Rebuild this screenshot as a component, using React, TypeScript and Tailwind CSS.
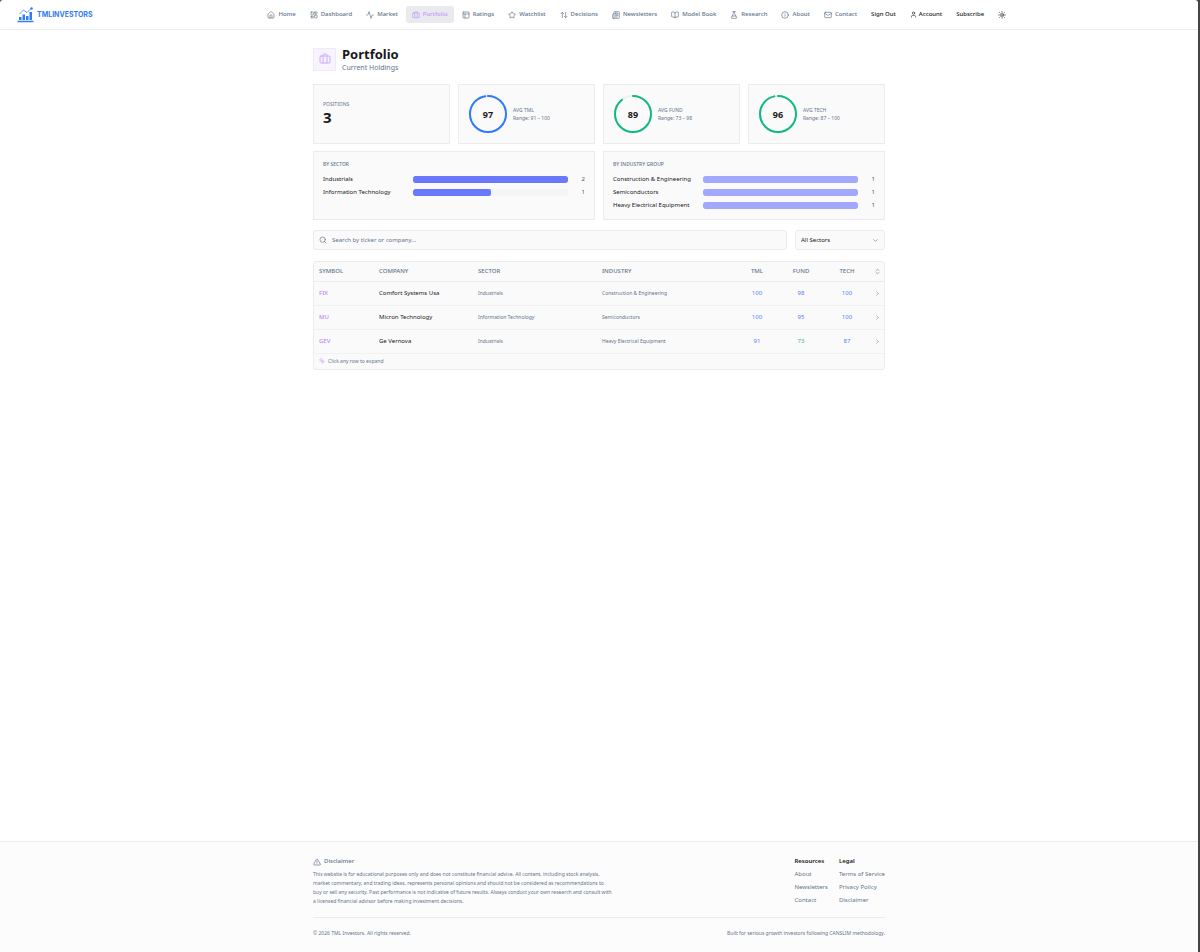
import React, { useState } from "react";
import {
  Activity,
  ArrowUpDown,
  BookOpen,
  Briefcase,
  ChevronDown,
  ChevronRight,
  ChevronsUpDown,
  FlaskConical,
  House,
  Info,
  LayoutDashboard,
  Mail,
  MousePointerClick,
  Newspaper,
  PanelsTopLeft,
  Search,
  Star,
  Sun,
  TriangleAlert,
  User
} from "lucide-react";

const navLinks = [
  { label: "Home", icon: House },
  { label: "Dashboard", icon: LayoutDashboard },
  { label: "Market", icon: Activity },
  { label: "Portfolio", icon: Briefcase, active: true },
  { label: "Ratings", icon: PanelsTopLeft },
  { label: "Watchlist", icon: Star },
  { label: "Decisions", icon: ArrowUpDown },
  { label: "Newsletters", icon: Newspaper },
  { label: "Model Book", icon: BookOpen },
  { label: "Research", icon: FlaskConical },
  { label: "About", icon: Info },
  { label: "Contact", icon: Mail }
];

const scores = [
  { label: "Avg TML", value: 97, range: "91 – 100", color: "text-[#2f7bf6]" },
  { label: "Avg Fund", value: 89, range: "73 – 98", color: "text-[#10b981]" },
  { label: "Avg Tech", value: 96, range: "87 – 100", color: "text-[#10b981]" }
];

const sectors = [
  { name: "Industrials", count: 2 },
  { name: "Information Technology", count: 1 }
];

const industries = [
  { name: "Construction & Engineering", count: 1 },
  { name: "Semiconductors", count: 1 },
  { name: "Heavy Electrical Equipment", count: 1 }
];

const holdings = [
  {
    symbol: "FIX",
    company: "Comfort Systems Usa",
    sector: "Industrials",
    industry: "Construction & Engineering",
    scores: [100, 98, 100]
  },
  {
    symbol: "MU",
    company: "Micron Technology",
    sector: "Information Technology",
    industry: "Semiconductors",
    scores: [100, 95, 100]
  },
  {
    symbol: "GEV",
    company: "Ge Vernova",
    sector: "Industrials",
    industry: "Heavy Electrical Equipment",
    scores: [91, 73, 87]
  }
];

const Logo = () => (
  <svg width="17" height="16" viewBox="0 0 34 32" fill="none" stroke="#2f7bf6">
    <path d="M1 29h32" strokeWidth="3" />
    <path d="M6.500 26v-6M13.500 26V15M20.500 26V18M27.500 26V10" strokeWidth="5" />
    <path d="M5 14l8-8 7 5 8-8" strokeWidth="1.500" />
    <circle cx="29" cy="3" r="2.500" fill="#2f7bf6" stroke="none" />
  </svg>
);

const Header = () => (
  <header className="flex h-[30px] items-center border-b border-[#ececee] px-[17px]">
    <a href="#" className="flex items-center gap-[3px]">
      <Logo />
      <span className="font-['Inter',sans-serif] text-[7px] font-bold text-[#2f7bf6]">
        TMLINVESTORS
      </span>
    </a>
    <nav className="flex flex-1 items-center justify-center gap-[2px] whitespace-nowrap font-medium">
      {navLinks.map(({ label, icon: Icon, active }) => (
        <a
          key={label}
          href="#"
          className={
            active
              ? "flex h-[17px] items-center gap-[3px] rounded-[3px] bg-[#e9e9ee] px-[6px] text-[#c49bfb]"
              : "flex h-[17px] items-center gap-[3px] px-[6px] text-[#64748b]"
          }
        >
          <Icon size={8} />
          {label}
        </a>
      ))}
      <button type="button" className="px-[6px] text-[#18181b]">
        Sign Out
      </button>
      <a href="#" className="flex items-center gap-[2px] px-[6px] text-[#18181b]">
        <User size={7} />
        Account
      </a>
      <a href="#" className="px-[6px] text-[#18181b]">
        Subscribe
      </a>
      <button type="button" aria-label="Toggle theme" className="px-[6px]">
        <Sun size={8} />
      </button>
    </nav>
  </header>
);

const Ring = ({ value, color }) => {
  const length = 2 * Math.PI * 18;
  return (
    <div className={`grid size-[38px] place-items-center ${color}`}>
      <svg
        className="col-start-1 row-start-1 -rotate-90"
        width="38"
        height="38"
        fill="none"
        strokeWidth="2"
      >
        <circle cx="19" cy="19" r="18" stroke="#eeeff1" />
        <circle
          cx="19"
          cy="19"
          r="18"
          stroke="currentColor"
          strokeLinecap="round"
          strokeDasharray={length}
          strokeDashoffset={length * (1 - value / 100)}
        />
      </svg>
      <span className="col-start-1 row-start-1 text-[9px] font-bold text-[#18181b]">
        {value}
      </span>
    </div>
  );
};

const Breakdown = ({ title, rows, barColor }) => {
  const max = Math.max(...rows.map(row => row.count));
  return (
    <section className="border border-[#ececee] bg-[#fafafa] px-[9px] pt-[9px] pb-[7px]">
      <h2 className="text-[5px] leading-[7px] font-medium text-[#64748b] uppercase">
        {title}
      </h2>
      <ul className="mt-[5px]">
        {rows.map(row => (
          <li key={row.name} className="flex h-[13px] items-center gap-[5px]">
            <span className="w-[85px] whitespace-nowrap">{row.name}</span>
            <div className="h-[7px] flex-1 overflow-hidden rounded-[2px] bg-[#f4f5f6]">
              <div
                className={`h-full rounded-[2px] ${barColor}`}
                style={{ width: `${(row.count / max) * 100}%` }}
              />
            </div>
            <span className="w-[12px] text-right text-[#475569]">
              {row.count}
            </span>
          </li>
        ))}
      </ul>
    </section>
  );
};

const HoldingsTable = ({ rows }) => (
  <div className="mt-[11px] overflow-hidden rounded-[3px] border border-[#ececee] bg-[#fafafa]">
    <table className="w-full table-fixed text-left">
      <thead className="text-[#64748b]">
        <tr className="h-[19px] border-b border-[#ececee] uppercase *:font-medium">
          <th className="w-[60px] pl-[5px]">Symbol</th>
          <th className="w-[99px] pl-[5px]">Company</th>
          <th className="w-[124px] pl-[5px]">Sector</th>
          <th className="pl-[5px]">Industry</th>
          <th className="w-[46px] text-center">TML</th>
          <th className="w-[42px] text-center">Fund</th>
          <th className="w-[50px] text-center">Tech</th>
          <th className="w-[12px] pl-[2px]">
            <button type="button" aria-label="Sort" className="block">
              <ChevronsUpDown size={7} />
            </button>
          </th>
        </tr>
      </thead>
      <tbody>
        {rows.map(row => (
          <tr key={row.symbol} className="h-[24px] border-b border-[#f1f1f2]">
            <td className="pl-[5px] font-medium text-[#c084fc]">{row.symbol}</td>
            <td className="pl-[5px]">{row.company}</td>
            <td className="pl-[5px] text-[5px] text-[#64748b]">{row.sector}</td>
            <td className="pl-[5px] text-[5px] text-[#64748b]">{row.industry}</td>
            {row.scores.map((score, i) => (
              <td
                key={i}
                className={
                  score >= 80
                    ? "text-center text-[#4f86f7]"
                    : "text-center text-[#2dbd90]"
                }
              >
                {score}
              </td>
            ))}
            <td className="pl-[2px] text-[#64748b]">
              <ChevronRight size={7} />
            </td>
          </tr>
        ))}
      </tbody>
    </table>
    <p className="flex h-[15px] items-center gap-[3px] px-[5px] text-[5px] text-[#64748b]">
      <MousePointerClick size={6} className="text-[#c084fc]" />
      Click any row to expand
    </p>
  </div>
);

const FooterLinks = ({ title, links }) => (
  <div>
    <h3 className="font-semibold text-[#18181b]">{title}</h3>
    <ul>
      {links.map(link => (
        <li key={link}>
          <a href="#">{link}</a>
        </li>
      ))}
    </ul>
  </div>
);

const Footer = () => (
  <footer className="mt-auto border-t border-[#ececee] bg-[#fcfcfc] text-[#64748b]">
    <div className="mx-auto max-w-[572px] pt-[13px] pb-[14px]">
      <div className="flex justify-between leading-[13px]">
        <div>
          <h3 className="flex items-center gap-[3px] font-medium">
            <TriangleAlert size={8} />
            Disclaimer
          </h3>
          <p className="mt-[2px] max-w-[299px] text-[5px] leading-[9px]">
            This website is for educational purposes only and does not constitute
            financial advice. All content, including stock analysis, market
            commentary, and trading ideas, represents personal opinions and should
            not be considered as recommendations to buy or sell any security. Past
            performance is not indicative of future results. Always conduct your
            own research and consult with a licensed financial advisor before
            making investment decisions.
          </p>
        </div>
        <div className="flex gap-[11px]">
          <FooterLinks
            title="Resources"
            links={["About", "Newsletters", "Contact"]}
          />
          <FooterLinks
            title="Legal"
            links={["Terms of Service", "Privacy Policy", "Disclaimer"]}
          />
        </div>
      </div>
      <div className="mt-[10px] flex justify-between border-t border-[#ececee] pt-[11px] text-[5px] leading-[9px]">
        <p>© 2026 TML Investors. All rights reserved.</p>
        <p>Built for serious growth investors following CANSLIM methodology.</p>
      </div>
    </div>
  </footer>
);

const App = () => {
  const [query, setQuery] = useState("");
  const [sector, setSector] = useState("All Sectors");

  const visible = holdings.filter(
    row =>
      (row.symbol + " " + row.company)
        .toLowerCase()
        .includes(query.toLowerCase()) &&
      (sector === "All Sectors" || row.sector === sector)
  );

  return (
    <div className="bg-[#444] pr-[2px] font-['Noto_Sans',sans-serif] text-[6px] leading-[9px] text-[#18181b]">
      <div className="flex min-h-screen flex-col rounded-[3px] bg-white">
        <Header />
        <main className="mx-auto w-full max-w-[572px] pt-[16px] pb-[30px]">
          <div className="flex items-center gap-[6px]">
            <div className="grid size-[23px] place-items-center border border-[#f0e9fd] bg-[#f8f4ff] text-[#cdaafb]">
              <Briefcase size={12} />
            </div>
            <div>
              <h1 className="text-[13px] leading-[17px] font-bold">Portfolio</h1>
              <p className="text-[7px] leading-[9px] text-[#64748b]">
                Current Holdings
              </p>
            </div>
          </div>

          <div className="mt-[12px] grid grid-cols-4 gap-[8px]">
            <section className="flex h-[60px] flex-col justify-center border border-[#ececee] bg-[#fafafa] px-[9px]">
              <h2 className="text-[5px] leading-[7px] text-[#64748b] uppercase">
                Positions
              </h2>
              <p className="text-[15px] leading-[19px] font-bold">3</p>
            </section>
            {scores.map(score => (
              <section
                key={score.label}
                className="flex h-[60px] items-center gap-[6px] border border-[#ececee] bg-[#fafafa] px-[10px]"
              >
                <Ring value={score.value} color={score.color} />
                <div className="text-[5px] text-[#64748b]">
                  <h2 className="leading-[7px] uppercase">{score.label}</h2>
                  <p className="leading-[8px]">Range: {score.range}</p>
                </div>
              </section>
            ))}
          </div>

          <div className="mt-[7px] grid grid-cols-2 gap-[8px]">
            <Breakdown title="By Sector" rows={sectors} barColor="bg-[#6a79fc]" />
            <Breakdown
              title="By Industry Group"
              rows={industries}
              barColor="bg-[#a2a9fc]"
            />
          </div>

          <div className="mt-[10px] flex gap-[8px]">
            <label className="flex h-[20px] flex-1 items-center gap-[5px] rounded-[3px] border border-[#ececee] bg-[#fafafa] px-[5px] text-[#64748b]">
              <Search size={8} />
              <input
                type="text"
                aria-label="Search holdings"
                value={query}
                onChange={e => setQuery(e.target.value)}
                placeholder="Search by ticker or company..."
                className="flex-1 outline-none placeholder:text-[#64748b]"
              />
            </label>
            <div className="grid w-[90px] items-center rounded-[3px] border border-[#ececee] bg-[#fafafa]">
              <select
                aria-label="Sector"
                value={sector}
                onChange={e => setSector(e.target.value)}
                className="col-start-1 row-start-1 h-full appearance-none px-[5px] outline-none"
              >
                <option>All Sectors</option>
                {sectors.map(s => (
                  <option key={s.name}>{s.name}</option>
                ))}
              </select>
              <ChevronDown
                size={7}
                className="pointer-events-none col-start-1 row-start-1 mr-[5px] justify-self-end text-[#64748b]"
              />
            </div>
          </div>

          <HoldingsTable rows={visible} />
        </main>
        <Footer />
      </div>
    </div>
  );
};

export default App;
